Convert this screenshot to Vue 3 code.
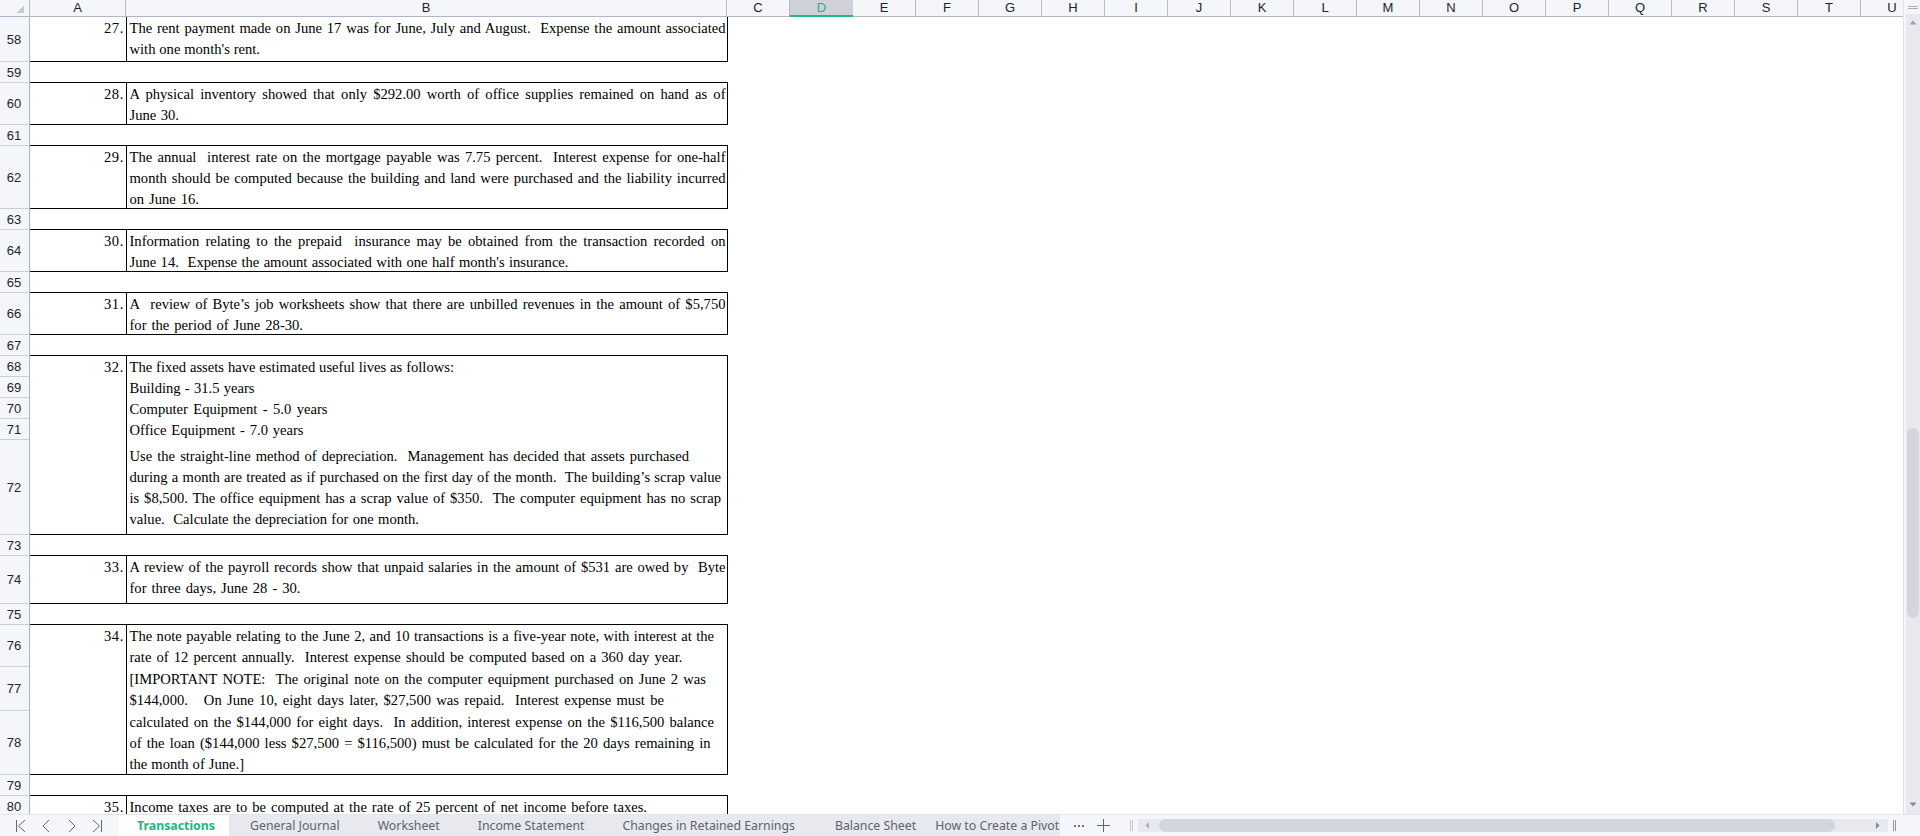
<template>
  <div class="app">
    <div class="main">
      <div class="sheet">
        <div class="col-heads">
          <div class="corner">
            <svg width="9" height="9" viewBox="0 0 9 9"><path d="M8 0.5V8H0.5Z" fill="#c5c9d4" /></svg>
          </div>
          <div
            v-for="col in columns"
            :key="col.label"
            class="col-head"
            :class="{ selected: col.label === 'D' }"
            :style="{ width: col.width + 'px' }"
          >
            {{ col.label }}
          </div>
        </div>

        <div class="rows">
          <div v-for="group in groups" :key="group.rows[0].n" class="group">
            <div class="row-heads">
              <div
                v-for="row in group.rows"
                :key="row.n"
                class="row-head"
                :style="{ height: row.h + 'px' }"
              >
                {{ row.n }}
              </div>
            </div>
            <template v-if="group.num">
              <div class="cell-a">{{ group.num }}</div>
              <div class="cell-b">
                <div
                  v-for="line in group.lines"
                  :key="line[0]"
                  class="line"
                  :style="lineStyle(line)"
                >
                  {{ line[0] }}
                </div>
              </div>
            </template>
            <div v-else class="spacer"></div>
          </div>
        </div>
      </div>

      <div class="vscroll">
        <div class="split-top"><span></span><span></span></div>
        <div class="v-track">
          <svg class="v-up" width="8" height="5" viewBox="0 0 8 5"><path d="M4 0.5L7.5 4.5H0.5Z" fill="#9aa0b4" /></svg>
          <div class="v-thumb"></div>
          <svg class="v-down" width="8" height="5" viewBox="0 0 8 5"><path d="M4 4.5L7.5 0.5H0.5Z" fill="#7f87a3" /></svg>
        </div>
      </div>
    </div>

    <div class="tabbar">
      <div class="nav">
        <button class="nav-btn">
          <svg width="12" height="14" viewBox="0 0 12 14"><path d="M1.5 1V13M10 1L3.5 7L10 13" /></svg>
        </button>
        <button class="nav-btn">
          <svg width="12" height="14" viewBox="0 0 12 14"><path d="M9 1L3 7L9 13" /></svg>
        </button>
        <button class="nav-btn">
          <svg width="12" height="14" viewBox="0 0 12 14"><path d="M3 1L9 7L3 13" /></svg>
        </button>
        <button class="nav-btn">
          <svg width="12" height="14" viewBox="0 0 12 14"><path d="M2 1L8.5 7L2 13M10.5 1V13" /></svg>
        </button>
      </div>

      <div class="tabs">
        <div v-for="(tab, i) in tabs" :key="tab" class="tab" :class="{ active: i === 0 }">{{ tab }}</div>
      </div>

      <div class="tools">
        <svg class="dots" width="12" height="4" viewBox="0 0 12 4" fill="#6b7280">
          <rect x="1" y="1" width="2" height="2" /><rect x="5" y="1" width="2" height="2" /><rect x="9" y="1" width="2" height="2" />
        </svg>
        <svg class="plus" width="13" height="13" viewBox="0 0 13 13"><path d="M6.5 0V13M0 6.5H13" stroke="#5f6675" /></svg>
        <div class="split-v light"><span></span><span></span></div>
        <div class="h-track">
          <svg class="h-left" width="4" height="7" viewBox="0 0 4 7"><path d="M0.5 3.5L4 0V7Z" fill="#a9afc2" /></svg>
          <div class="h-thumb"></div>
          <svg class="h-right" width="4" height="7" viewBox="0 0 4 7"><path d="M3.5 3.5L0 0V7Z" fill="#7f87a3" /></svg>
        </div>
        <div class="split-v"><span></span><span></span></div>
      </div>
    </div>
  </div>
</template>

<script setup>
const FULL = 725.5
const TEXT_LEFT = 129.5

const columns = [{ label: 'A', width: 96 }, { label: 'B', width: 601 }]
for (const label of 'CDEFGHIJKLMNOPQRSTU') columns.push({ label, width: 63 })

const blank = (n) => ({ rows: [{ n, h: 21 }] })

const groups = [
  {
    rows: [{ n: 58, h: 45 }],
    num: '27.',
    lines: [
      ['The rent payment made on June 17 was for June, July and August.\u00a0 Expense the amount associated', FULL],
      ["with one month's rent.", 260],
    ],
  },
  blank(59),
  {
    rows: [{ n: 60, h: 42 }],
    num: '28.',
    lines: [
      ['A physical inventory showed that only $292.00 worth of office supplies remained on hand as of', FULL],
      ['June 30.', 179],
    ],
  },
  blank(61),
  {
    rows: [{ n: 62, h: 63 }],
    num: '29.',
    lines: [
      ['The annual\u00a0 interest rate on the mortgage payable was 7.75 percent.\u00a0 Interest expense for one-half', FULL],
      ['month should be computed because the building and land were purchased and the liability incurred', FULL],
      ['on June 16.', 199],
    ],
  },
  blank(63),
  {
    rows: [{ n: 64, h: 42 }],
    num: '30.',
    lines: [
      ['Information relating to the prepaid\u00a0 insurance may be obtained from the transaction recorded on', FULL],
      ["June 14.\u00a0 Expense the amount associated with one half month's insurance.", 568.5],
    ],
  },
  blank(65),
  {
    rows: [{ n: 66, h: 42 }],
    num: '31.',
    lines: [
      ['A\u00a0 review of Byte\u2019s job worksheets show that there are unbilled revenues in the amount of $5,750', FULL],
      ['for the period of June 28-30.', 303],
    ],
  },
  blank(67),
  {
    rows: [
      { n: 68, h: 21 },
      { n: 69, h: 21 },
      { n: 70, h: 21 },
      { n: 71, h: 21 },
      { n: 72, h: 95 },
    ],
    num: '32.',
    lines: [
      ['The fixed assets have estimated useful lives as follows:', 454],
      ['Building - 31.5 years', 254.5],
      ['Computer Equipment - 5.0 years', 327.5],
      ['Office Equipment - 7.0 years', 303.5],
      ['Use the straight-line method of depreciation.\u00a0 Management has decided that assets purchased', 689, 5],
      ['during a month are treated as if purchased on the first day of the month.\u00a0 The building\u2019s scrap value', 721],
      ['is $8,500. The office equipment has a scrap value of $350.\u00a0 The computer equipment has no scrap', 721],
      ['value.\u00a0 Calculate the depreciation for one month.', 419],
    ],
  },
  blank(73),
  {
    rows: [{ n: 74, h: 48 }],
    num: '33.',
    lines: [
      ['A review of the payroll records show that unpaid salaries in the amount of $531 are owed by\u00a0 Byte', FULL],
      ['for three days, June 28 - 30.', 300.5],
    ],
  },
  blank(75),
  {
    rows: [
      { n: 76, h: 42 },
      { n: 77, h: 44 },
      { n: 78, h: 64 },
    ],
    num: '34.',
    lines: [
      ['The note payable relating to the June 2, and 10 transactions is a five-year note, with interest at the', 714],
      ['rate of 12 percent annually.\u00a0 Interest expense should be computed based on a 360 day year.', 682.5],
      ['[IMPORTANT NOTE:\u00a0 The original note on the computer equipment purchased on June 2 was', 706, 1],
      ['$144,000.\u00a0\u00a0 On June 10, eight days later, $27,500 was repaid.\u00a0 Interest expense must be', 664],
      ['calculated on the $144,000 for eight days.\u00a0 In addition, interest expense on the $116,500 balance', 714, 1],
      ['of the loan ($144,000 less $27,500 = $116,500) must be calculated for the 20 days remaining in', 710.5],
      ['the month of June.]', 244],
    ],
  },
  blank(79),
  {
    rows: [{ n: 80, h: 21 }],
    num: '35.',
    lines: [['Income taxes are to be computed at the rate of 25 percent of net income before taxes.', 647]],
  },
]

const tabs = [
  'Transactions',
  'General Journal',
  'Worksheet',
  'Income Statement',
  'Changes in Retained Earnings',
  'Balance Sheet',
  'How to Create a Pivot Table',
]

const lineStyle = (line) => ({
  width: line[1] - TEXT_LEFT + 'px',
  marginTop: (line[2] || 0) + 'px',
})
</script>

<style>
html,
body {
  margin: 0;
  background: #fff;
}
</style>

<style scoped>
.app {
  width: 1920px;
  height: 836px;
  display: flex;
  flex-direction: column;
  overflow: hidden;
  background: #fff;
  font-family: 'Liberation Sans', Arial, sans-serif;
}

.main {
  height: 814px;
  display: flex;
}

.sheet {
  flex: 1;
  min-width: 0;
  overflow: hidden;
}

.col-heads {
  display: flex;
  height: 17px;
  background: #f5f6f9;
}

.corner {
  flex: none;
  box-sizing: border-box;
  width: 30px;
  padding: 5px 0 0 16px;
  border-right: 1px solid #b4bbcf;
  border-bottom: 1px solid #aeb6cc;
}

.corner svg {
  display: block;
}

.col-head {
  flex: none;
  box-sizing: border-box;
  border-right: 1px solid #b4bbcf;
  border-bottom: 1px solid #aeb6cc;
  font-size: 13px;
  line-height: 16px;
  text-align: center;
  color: #1c2433;
}

.col-head.selected {
  background: #cfd2da;
  border-right: none;
  border-bottom: 2px solid #1fb784;
  color: #22b585;
}

.group {
  display: flex;
}

.row-heads {
  flex: none;
  width: 30px;
}

.row-head {
  box-sizing: border-box;
  display: flex;
  align-items: center;
  justify-content: center;
  padding-right: 1px;
  background: #f5f6f9;
  border-right: 1px solid #a9b1c7;
  border-bottom: 1px solid #c9cedb;
  font-size: 13px;
  color: #1c2433;
}

.spacer {
  width: 698px;
  border-bottom: 1px solid #000;
}

.cell-a,
.cell-b {
  box-sizing: border-box;
  padding-top: 1px;
  border-bottom: 1px solid #000;
  border-right: 1px solid #000;
  font-family: 'Liberation Serif', 'Times New Roman', serif;
  font-size: 14.6px;
  line-height: 21px;
  color: #000;
}

.cell-a {
  width: 97px;
  padding-right: 2px;
  text-align: right;
  letter-spacing: 0.6px;
}

.cell-b {
  width: 601px;
  padding-left: 2.5px;
}

.line {
  white-space: nowrap;
  text-align: justify;
  text-align-last: justify;
}

.line:last-child {
  margin-bottom: -2px;
}

.vscroll {
  flex: none;
  box-sizing: border-box;
  width: 17px;
  display: flex;
  flex-direction: column;
  background: #f5f6f9;
  border-left: 1px solid #dfe1e8;
}

.split-top {
  flex: none;
  height: 14px;
  padding: 6px 0 0 4px;
  box-sizing: border-box;
}

.split-top span {
  display: block;
  width: 10px;
  height: 1px;
  margin-bottom: 1px;
  background: #a8adbd;
}

.v-track {
  flex: 1;
  margin-left: 2px;
  display: flex;
  flex-direction: column;
  background: #e8e9ef;
}

.v-up {
  margin: 6px 0 0 3px;
}

.v-thumb {
  width: 12px;
  height: 190px;
  margin: 403px 0 0 1px;
  border-radius: 6px;
  background: #d3d6de;
}

.v-down {
  margin: auto 0 7px 3px;
}

.tabbar {
  flex: none;
  box-sizing: border-box;
  height: 22px;
  display: flex;
  background: #f5f6f9;
  border-top: 1px solid #e3e5ec;
}

.nav {
  flex: none;
  box-sizing: border-box;
  width: 119px;
  padding-left: 8px;
  display: flex;
}

.nav-btn {
  width: 25.5px;
  padding: 0;
  border: none;
  background: none;
  display: flex;
  align-items: center;
  justify-content: center;
}

.nav-btn path {
  fill: none;
  stroke: #5f6675;
  stroke-width: 1;
}

.tabs {
  flex: none;
  width: 941px;
  display: flex;
  overflow: hidden;
  background: #e8e9ef;
}

.tab {
  flex: none;
  padding: 0 19px;
  font-family: 'Noto Sans', 'Open Sans', sans-serif;
  font-size: 12.3px;
  line-height: 21px;
  white-space: nowrap;
  color: #5b6272;
}

.tab.active {
  box-sizing: border-box;
  width: 110px;
  padding: 0 0 0 4px;
  text-align: center;
  background: #fff;
  font-weight: 700;
  color: #21b583;
}

.tab:nth-child(2) {
  margin-left: 2px;
}

.tab:nth-child(6) {
  margin-left: 2px;
}

.tab:last-child {
  padding-left: 0;
}

.tools {
  flex: 1;
  display: flex;
  align-items: center;
}

.dots {
  margin-left: 13px;
}

.plus {
  margin-left: 12px;
}

.split-v {
  flex: none;
  display: flex;
  gap: 1px;
  height: 11px;
  margin-left: 5px;
}

.split-v span {
  width: 1px;
  background: #8e96ad;
}

.split-v.light {
  margin-left: 20px;
}

.split-v.light span {
  background: #c3c7d4;
}

.h-track {
  flex: none;
  box-sizing: border-box;
  width: 750px;
  height: 13px;
  margin-left: 5px;
  display: flex;
  align-items: center;
  background: #e8e9ef;
}

.h-left {
  margin-left: 7px;
}

.h-thumb {
  width: 676px;
  height: 13px;
  margin-left: 10px;
  border-radius: 7px;
  background: #d3d6de;
}

.h-right {
  margin-left: 41px;
}
</style>
